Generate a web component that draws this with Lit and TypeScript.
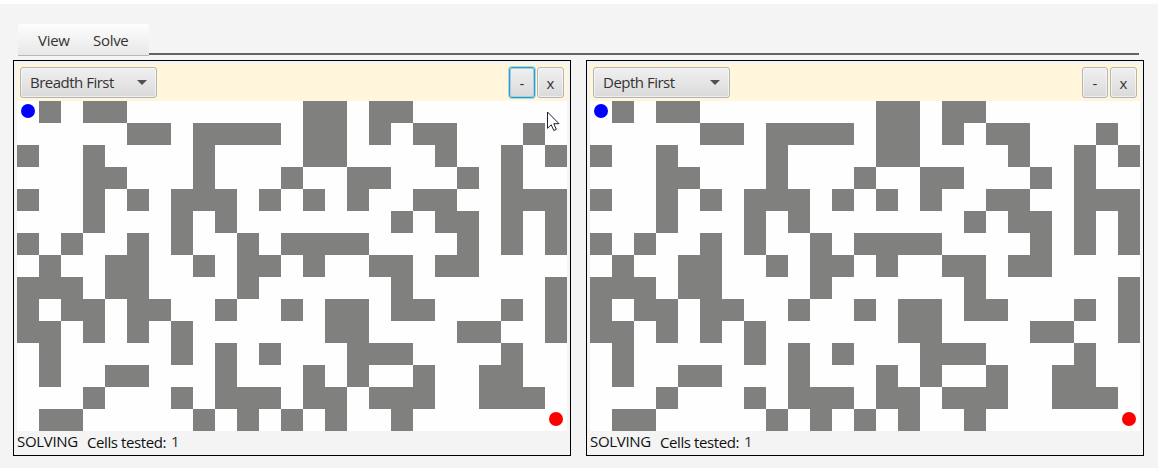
import { LitElement, html, css } from "lit";
import { customElement, property } from "lit/decorators.js";
import { classMap } from "lit/directives/class-map.js";

const MAZE = [
  ".#.##........##.##.......",
  ".....##.####.##.#.##...#.",
  "#..#....#....##....#..#.#",
  "...##...#...#..##...#.#..",
  "#..#.#.###.#.#.#..##..###",
  "...#...#.#.......#.##.#.#",
  "#.#..#.#..#.####....#.#.#",
  ".#..##..#.##.#..##.##....",
  "###.##....#......#......#",
  "#.##.##..#..#.##.##...#.#",
  "##.#.#.#......##....##..#",
  ".#.....#.#.#...###....#..",
  ".#..##...#...#.#..#..##..",
  "...#...#.###.##.###..###.",
  ".##.....#.#.#.#..#.......",
];

@customElement("maze-board")
export class MazeBoard extends LitElement {
  static styles = css`
    :host { display: block; }
    .board {
      display: grid;
      grid-template-columns: repeat(25, 22px);
      grid-auto-rows: 22px;
      background: #fefefe;
    }
    .cell { padding: 3px 4px; box-sizing: border-box; }
    .wall { background: #80807e; }
    .dot { width: 14px; height: 14px; border-radius: 50%; }
    .start { background: #0000fe; }
    .goal { background: #fe0000; }
  `;

  render() {
    return html`<div class="board">
      ${MAZE.map((row, r) =>
        [...row].map((c, i) => html`<div class=${classMap({ cell: true, wall: c === "#" })}>
          ${r === 0 && i === 0 ? html`<div class="dot start"></div>` : ""}
          ${r === MAZE.length - 1 && i === row.length - 1 ? html`<div class="dot goal"></div>` : ""}
        </div>`))}
    </div>`;
  }
}

@customElement("solver-panel")
export class SolverPanel extends LitElement {
  @property() name = "";
  @property({ type: Boolean }) active = false;

  static styles = css`
    :host {
      display: block;
      box-sizing: border-box;
      width: 558px;
      height: 396px;
      border: 1px solid #000;
      padding: 3px;
      background: #f4f4f4;
    }
    .bar {
      display: flex;
      box-sizing: border-box;
      height: 37px;
      padding: 3px;
      gap: 2px;
      background: #fff6dc;
    }
    .control {
      display: flex;
      align-items: center;
      justify-content: center;
      box-sizing: border-box;
      height: 31px;
      border: 1px solid #b5b5b5;
      border-radius: 3px;
      background: linear-gradient(#f0f0f0, #dadada);
      box-shadow: inset 0 0 0 1px rgba(255, 255, 255, 0.55);
      font: 15px "Open Sans", "Noto Sans", sans-serif;
      color: #333;
    }
    .combo { width: 137px; justify-content: space-between; padding: 0 9px; margin-right: auto; }
    .label { padding-bottom: 2px; letter-spacing: -0.5px; }
    .arrow { width: 10px; height: 5px; fill: #505054; }
    .minus { width: 26px; }
    .close { width: 27px; }
    .focused { border-color: #2b9ccb; box-shadow: 0 0 0 1px #a5d6e6, inset 0 0 0 1px #a5cfdf; }
    .status {
      display: flex;
      height: 21px;
      font: 15px/21px "Open Sans", "Noto Sans", sans-serif;
      color: #101010;
    }
    .state { width: 70px; letter-spacing: -0.3px; }
    .tested { width: 84px; padding-top: 1px; letter-spacing: -0.4px; white-space: nowrap; }
    .count { color: #333; }
  `;

  render() {
    return html`
      <div class="bar">
        <div class="control combo">
          <span class="label">${this.name}</span>
          <svg class="arrow" viewBox="0 0 10 5"><path d="M0 0H10L5 5Z" /></svg>
        </div>
        <div class=${classMap({ control: true, minus: true, focused: this.active })}>-</div>
        <div class="control close">x</div>
      </div>
      <maze-board></maze-board>
      <div class="status">
        <span class="state">SOLVING</span>
        <span class="tested">Cells tested:</span>
        <span class="count">1</span>
      </div>`;
  }
}

@customElement("app-root")
export class AppRoot extends LitElement {
  static styles = css`
    :host {
      display: block;
      position: relative;
      box-sizing: border-box;
      width: 1158px;
      height: 468px;
      overflow: hidden;
      border-top: 4px solid #fefefe;
      padding: 20px 14px 0 13px;
      background: #f4f4f4;
    }
    .top { display: flex; height: 36px; padding: 0 5px; }
    .menu {
      display: flex;
      box-sizing: border-box;
      width: 131px;
      height: 32px;
      padding-left: 20px;
      border-bottom: 1px solid #b8b8b8;
      background: linear-gradient(#fdfdfd, #e8e8e8);
      font: 15px/32px "Open Sans", "Noto Sans", sans-serif;
      color: #333;
    }
    .item { width: 55px; letter-spacing: -0.3px; }
    .rule { flex: 1; height: 2px; margin-top: 29px; background: #626262; }
    .panels { display: flex; gap: 15px; }
    .cursor { position: absolute; left: 547px; top: 107px; width: 13px; height: 21px; }
  `;

  render() {
    return html`
      <div class="top">
        <div class="menu"><span class="item">View</span><span class="item">Solve</span></div>
        <div class="rule"></div>
      </div>
      <div class="panels">
        <solver-panel name="Breadth First" active></solver-panel>
        <solver-panel name="Depth First"></solver-panel>
      </div>
      <svg class="cursor" viewBox="0 0 13 21">
        <path d="M.5 1V17.3L4.2 13.8L6.8 19.5L9.3 18.4L6.8 12.7H12Z" fill="#fff" stroke="#20202c" stroke-width="1" />
      </svg>`;
  }
}
